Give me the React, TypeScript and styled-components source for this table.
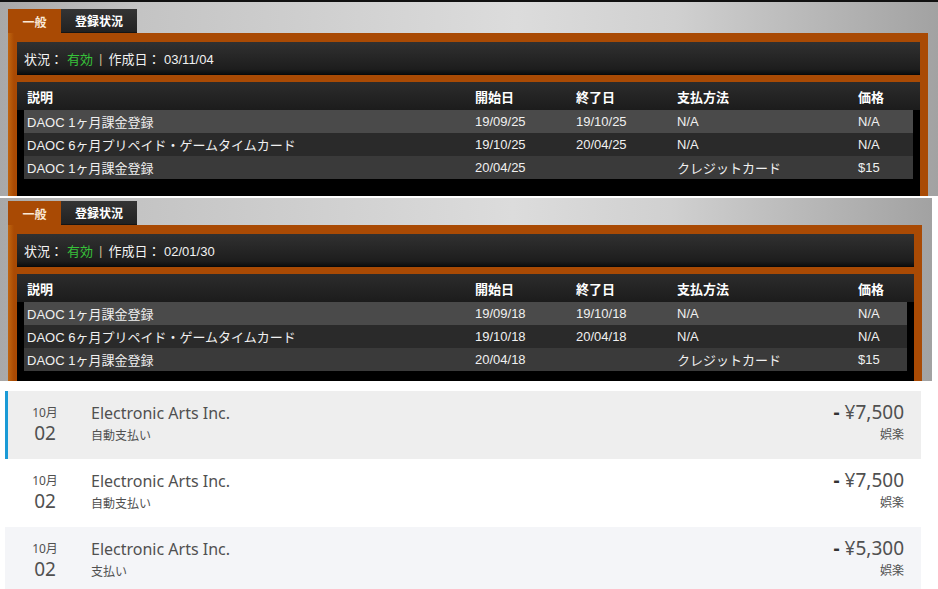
import styled, { createGlobalStyle } from "styled-components";

const GlobalStyle = createGlobalStyle`
  html, body {
    margin: 0;
    padding: 0;
    background: #ffffff;
  }
  body {
    width: 938px;
    height: 589px;
    overflow: hidden;
    font-family: "Liberation Sans", "Noto Sans CJK JP", sans-serif;
  }
`;

interface Subscription {
  name: string;
  start: string;
  end: string;
  method: string;
  price: string;
}

interface AccountData {
  created: string;
  rows: Subscription[];
}

const accounts: AccountData[] = [
  {
    created: "03/11/04",
    rows: [
      { name: "DAOC 1ヶ月課金登録", start: "19/09/25", end: "19/10/25", method: "N/A", price: "N/A" },
      { name: "DAOC 6ヶ月プリペイド・ゲームタイムカード", start: "19/10/25", end: "20/04/25", method: "N/A", price: "N/A" },
      { name: "DAOC 1ヶ月課金登録", start: "20/04/25", end: "", method: "クレジットカード", price: "$15" },
    ],
  },
  {
    created: "02/01/30",
    rows: [
      { name: "DAOC 1ヶ月課金登録", start: "19/09/18", end: "19/10/18", method: "N/A", price: "N/A" },
      { name: "DAOC 6ヶ月プリペイド・ゲームタイムカード", start: "19/10/18", end: "20/04/18", method: "N/A", price: "N/A" },
      { name: "DAOC 1ヶ月課金登録", start: "20/04/18", end: "", method: "クレジットカード", price: "$15" },
    ],
  },
];

const transactions = [
  { month: "10月", day: "02", payee: "Electronic Arts Inc.", type: "自動支払い", amount: "¥7,500", category: "娯楽", tone: "selected" },
  { month: "10月", day: "02", payee: "Electronic Arts Inc.", type: "自動支払い", amount: "¥7,500", category: "娯楽", tone: "plain" },
  { month: "10月", day: "02", payee: "Electronic Arts Inc.", type: "支払い", amount: "¥5,300", category: "娯楽", tone: "alt" },
] as const;

function AccountPanel(props: { data: AccountData; height: number; width: number; top: number; edge?: boolean }) {
  const { data, height, width, top, edge } = props;
  return (
    <Panel $height={height} $width={width} $top={top} $edge={edge}>
      <Tabs>
        <Tab $active>一般</Tab>
        <Tab>登録状況</Tab>
      </Tabs>
      <Body>
        <StatusBar>
          状況：<Active>有効</Active>
          <Divider>|</Divider>作成日：&nbsp;{data.created}
        </StatusBar>
        <TableBox>
          <HeaderRow>
            <span>説明</span>
            <span>開始日</span>
            <span>終了日</span>
            <span>支払方法</span>
            <span>価格</span>
          </HeaderRow>
          {data.rows.map((row, i) => (
            <DataRow key={i} $index={i}>
              <span>{row.name}</span>
              <span>{row.start}</span>
              <span>{row.end}</span>
              <span>{row.method}</span>
              <span>{row.price}</span>
            </DataRow>
          ))}
        </TableBox>
      </Body>
    </Panel>
  );
}

export default function App() {
  return (
    <>
      <GlobalStyle />
      <Page>
        <AccountPanel data={accounts[0]} height={196} width={938} top={7} edge />
        <AccountPanel data={accounts[1]} height={183} width={932} top={3} />
        <TxList>
          {transactions.map((tx, i) => (
            <TxItem key={i} $tone={tx.tone}>
              <DateBlock>
                <Month>{tx.month}</Month>
                <Day>{tx.day}</Day>
              </DateBlock>
              <TxInfo>
                <Payee>{tx.payee}</Payee>
                <TxType>{tx.type}</TxType>
              </TxInfo>
              <TxRight>
                <Amount>
                  <Minus>-</Minus>&nbsp;{tx.amount}
                </Amount>
                <Category>{tx.category}</Category>
              </TxRight>
            </TxItem>
          ))}
        </TxList>
      </Page>
    </>
  );
}

const Page = styled.div`
  display: flex;
  flex-direction: column;
  gap: 2px;
  width: 938px;
`;

const Panel = styled.section<{ $height: number; $width: number; $top: number; $edge?: boolean }>`
  box-sizing: border-box;
  width: ${({ $width }) => $width}px;
  height: ${({ $height }) => $height}px;
  overflow: hidden;
  padding: ${({ $top }) => $top}px 10px 0 8px;
  border-top: ${({ $edge }) => ($edge ? "2px solid #111" : "none")};
  background: linear-gradient(to right, #a8a8a8 0%, #c4c4c4 15%, #dcdcdc 55%, #d0d0d0 72%, #a2a2a2 100%);
`;

const Tabs = styled.div`
  display: flex;
  height: 24px;
`;

const Tab = styled.div<{ $active?: boolean }>`
  display: flex;
  align-items: center;
  justify-content: center;
  width: ${({ $active }) => ($active ? "53px" : "76px")};
  font-size: 12px;
  font-weight: bold;
  color: ${({ $active }) => ($active ? "#fbe9d6" : "#ffffff")};
  background: ${({ $active }) => ($active ? "#a94a04" : "linear-gradient(#343434, #222222)")};
  border-bottom: ${({ $active }) => ($active ? "none" : "1px solid #151515")};
  box-sizing: border-box;
`;

const Body = styled.div`
  display: flex;
  flex-direction: column;
  gap: 7px;
  padding: 9px 8px 0 9px;
  background: linear-gradient(to right, #c0650f 0px, #a94a04 6px, #a94a04 100%);
  min-height: 300px;
`;

const StatusBar = styled.div`
  display: flex;
  align-items: center;
  height: 33px;
  padding-left: 7px;
  font-size: 13px;
  color: #f2f2f2;
  background: linear-gradient(#313131, #1d1d1d 85%, #0e0e0e);
  border-bottom: 1px solid #0a0a0a;
  box-sizing: border-box;
`;

const Active = styled.span`
  color: #37c23a;
  margin-left: 4px;
`;

const Divider = styled.span`
  color: #c8b88a;
  margin: 0 6px;
`;

const TableBox = styled.div`
  display: flex;
  flex-direction: column;
  padding: 0 7px 20px;
  background:
    linear-gradient(#2c2c2c, #1c1c1c) 0 0 / 100% 28px no-repeat,
    #000000;
`;

const Columns = styled.div`
  display: grid;
  grid-template-columns: 448px 101px 101px 181px 1fr;
  align-items: center;
  padding-left: 3px;
  font-size: 13px;
  white-space: nowrap;
`;

const HeaderRow = styled(Columns)`
  height: 28px;
  padding-top: 1px;
  box-sizing: border-box;
  font-weight: bold;
  color: #ffffff;
`;

const rowColors = ["#4a4a4a", "#2a2a2a", "#3a3a3a"];

const DataRow = styled(Columns)<{ $index: number }>`
  height: 23px;
  color: #f0f0f0;
  background: ${({ $index }) => rowColors[$index % 3]};
`;

const TxList = styled.div`
  display: flex;
  flex-direction: column;
  padding: 8px 17px 0 5px;
  background: #ffffff;
`;

const toneBg = { selected: "#eeeeee", plain: "#ffffff", alt: "#f4f5f8" };

const TxItem = styled.div<{ $tone: "selected" | "plain" | "alt" }>`
  display: flex;
  align-items: flex-start;
  height: 68px;
  box-sizing: border-box;
  padding: 13px 17px 0 0;
  background: ${({ $tone }) => toneBg[$tone]};
  border-left: 3px solid ${({ $tone }) => ($tone === "selected" ? "#1a9ad6" : "transparent")};
  font-family: "Noto Sans", "Noto Sans CJK JP", sans-serif;
  color: #505050;
`;

const DateBlock = styled.div`
  display: flex;
  flex-direction: column;
  align-items: center;
  width: 78px;
`;

const Month = styled.span`
  font-size: 12px;
  line-height: 17px;
  margin-left: -4px;
`;

const Day = styled.span`
  font-size: 19px;
  line-height: 26px;
  margin-top: -1px;
  margin-left: -4px;
`;

const TxInfo = styled.div`
  display: flex;
  flex-direction: column;
  gap: 7px;
  flex: 1;
  padding-left: 5px;
`;

const Payee = styled.span`
  font-size: 16px;
  line-height: 18px;
`;

const TxType = styled.span`
  font-size: 12px;
  line-height: 14px;
`;

const TxRight = styled.div`
  display: flex;
  flex-direction: column;
  align-items: flex-end;
  gap: 5px;
`;

const Amount = styled.span`
  font-size: 19px;
  line-height: 22px;
  margin-top: -3px;
`;

const Minus = styled.span`
  font-weight: bold;
  color: #333333;
`;

const Category = styled.span`
  font-size: 12px;
  line-height: 14px;
`;
